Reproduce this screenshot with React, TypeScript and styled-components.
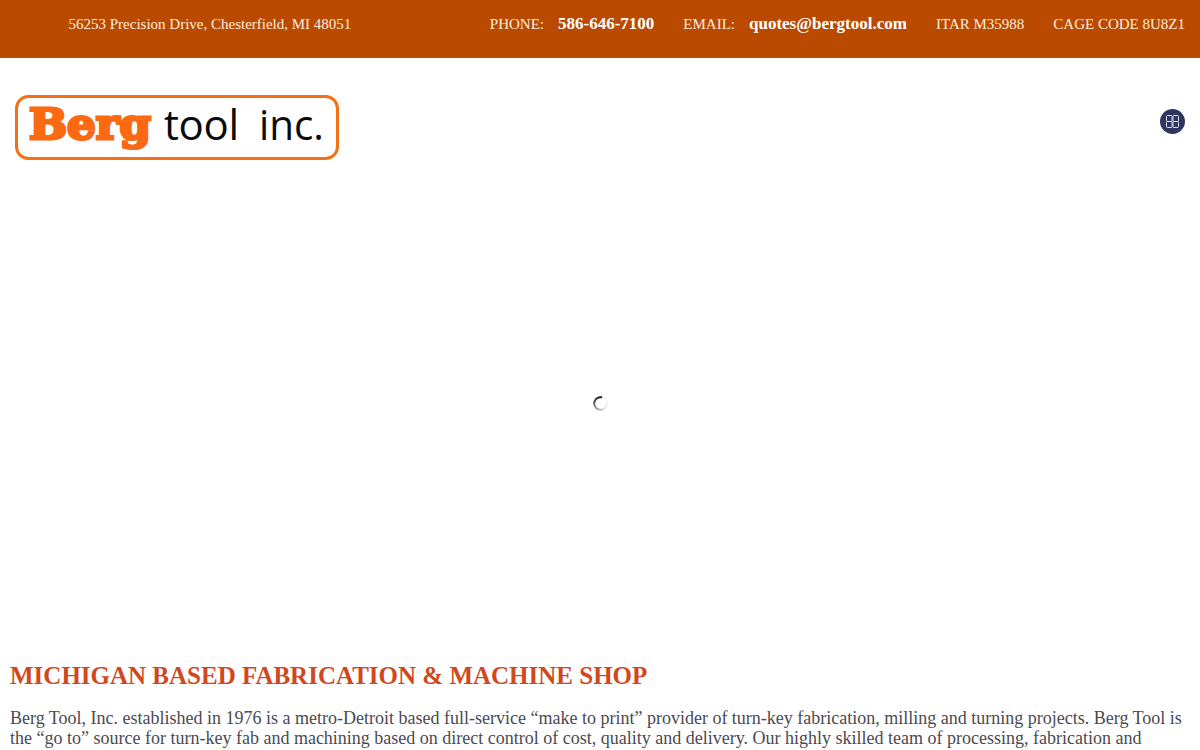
import React from 'react';
import styled, { createGlobalStyle } from 'styled-components';

const GlobalStyle = createGlobalStyle`
  html, body {
    margin: 0;
    padding: 0;
    background: #fff;
    font-family: "Liberation Serif", "Times New Roman", serif;
  }
`;

const TopBar = styled.header`
  display: flex;
  align-items: flex-start;
  justify-content: space-between;
  height: 58px;
  padding: 15px 15px 0 68.5px;
  box-sizing: border-box;
  background: #b94a00;
  color: #fdeedd;
  font-size: 15px;
  line-height: 18px;
`;

const ContactList = styled.div`
  display: flex;
  align-items: baseline;
  gap: 29px;
`;

const ContactItem = styled.span`
  white-space: nowrap;
`;

const ContactValue = styled.strong`
  margin-left: 14px;
  color: #fff;
  font-size: 17px;
  font-weight: 700;
`;

const NavRow = styled.div`
  display: flex;
  align-items: flex-start;
  justify-content: space-between;
  padding: 37px 15px 0;
  height: 115px;
  box-sizing: border-box;
`;

const MenuButton = styled.button`
  display: flex;
  align-items: center;
  justify-content: center;
  width: 25px;
  height: 25px;
  margin-top: 14px;
  padding: 0;
  border: none;
  border-radius: 50%;
  background: #2e3561;
`;

const Hero = styled.section`
  display: flex;
  justify-content: center;
  height: 488px;
  padding-top: 223px;
  box-sizing: border-box;
`;

const Spinner = styled.div`
  width: 15px;
  height: 15px;
  border-radius: 50%;
  background: conic-gradient(from 20deg, #ffffff 0deg, #e4e4e4 120deg, #8a8a8a 220deg, #222 320deg, #222 350deg, #fff 360deg);
  -webkit-mask: radial-gradient(circle, transparent 4.9px, #000 5.5px);
  mask: radial-gradient(circle, transparent 4.9px, #000 5.5px);
`;

const Content = styled.main`
  padding: 0 10px;
`;

const Heading = styled.h1`
  margin: 0 0 17px;
  color: #d1481c;
  font-size: 25px;
  line-height: 30px;
  font-weight: 700;
`;

const Intro = styled.p`
  margin: 0;
  color: #4a4a52;
  font-size: 18px;
  line-height: 20px;
`;

const Logo = () => (
  <svg width="324" height="65" viewBox="0 0 324 65" role="img" aria-label="Berg tool inc.">
    <rect x="1.5" y="1.5" width="321" height="62" rx="12" fill="#fff" stroke="#f37016" strokeWidth="3" />
    <text
      x="14"
      y="44"
      fontFamily="'DejaVu Serif', serif"
      fontWeight="700"
      fontSize="42"
      fill="#fb6a13"
      stroke="#fb6a13"
      strokeWidth="3"
      strokeLinejoin="miter"
      textLength="122"
      lengthAdjust="spacingAndGlyphs"
    >
      Berg
    </text>
    <text x="149" y="45" fontFamily="'Open Sans', sans-serif" fontSize="42" fill="#0b0b0b" textLength="75" lengthAdjust="spacing">
      tool
    </text>
    <text x="244" y="45" fontFamily="'Open Sans', sans-serif" fontSize="42" fill="#0b0b0b" textLength="65" lengthAdjust="spacingAndGlyphs">
      inc.
    </text>
  </svg>
);

const GridIcon = () => (
  <svg width="15" height="15" viewBox="0 0 15 15" fill="none" stroke="#dfe3f2" strokeWidth="1">
    <rect x="1.5" y="1.5" width="5.5" height="6" rx="1" />
    <rect x="8" y="1.5" width="5.5" height="6" rx="1" />
    <rect x="1.5" y="7.5" width="5.5" height="6" rx="1" />
    <rect x="8" y="7.5" width="5.5" height="6" rx="1" />
  </svg>
);

export default function App() {
  return (
    <>
      <GlobalStyle />
      <TopBar>
        <span>56253 Precision Drive, Chesterfield, MI 48051</span>
        <ContactList>
          <ContactItem>
            PHONE:<ContactValue>586-646-7100</ContactValue>
          </ContactItem>
          <ContactItem>
            EMAIL:<ContactValue>quotes@bergtool.com</ContactValue>
          </ContactItem>
          <ContactItem>ITAR M35988</ContactItem>
          <ContactItem>CAGE CODE 8U8Z1</ContactItem>
        </ContactList>
      </TopBar>
      <NavRow>
        <Logo />
        <MenuButton aria-label="Menu">
          <GridIcon />
        </MenuButton>
      </NavRow>
      <Hero>
        <Spinner />
      </Hero>
      <Content>
        <Heading>MICHIGAN BASED FABRICATION &amp; MACHINE SHOP</Heading>
        <Intro>
          Berg Tool, Inc. established in 1976 is a metro-Detroit based full-service “make to print” provider of
          turn-key fabrication, milling and turning projects. Berg Tool is the “go to” source for turn-key fab and
          machining based on direct control of cost, quality and delivery. Our highly skilled team of processing,
          fabrication and
        </Intro>
      </Content>
    </>
  );
}
